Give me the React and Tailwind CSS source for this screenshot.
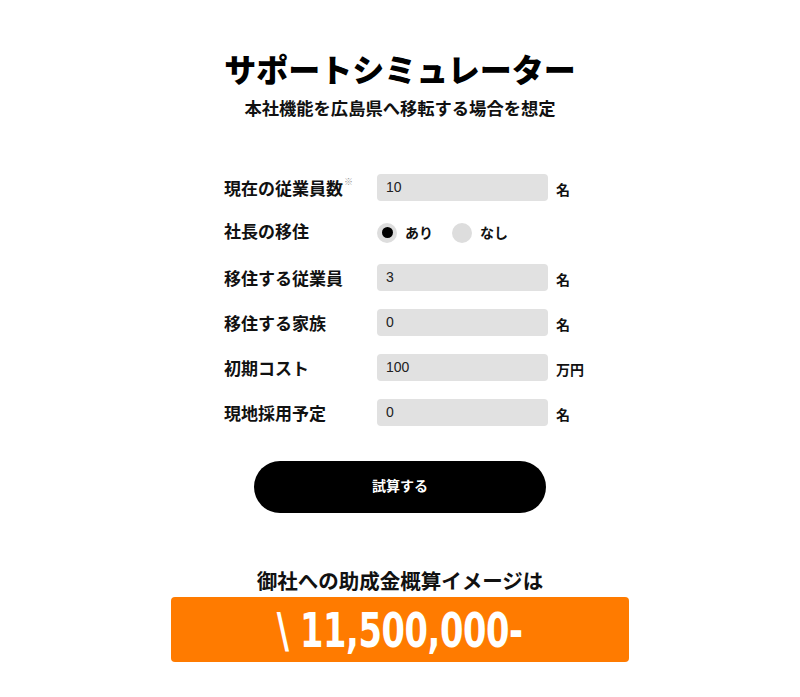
import React from "react";

const jp = { fontFamily: '"Noto Sans CJK JP", "Noto Sans", sans-serif' };

function Row({ label, note, value, unit }) {
  return (
    <div className="flex h-[27px] items-center">
      <div className="w-[153px] text-[17px] font-bold text-[#111] leading-none flex items-start" style={jp}>
        <span>{label}</span>
        {note && <span className="text-[9px] text-[#999] font-normal -mt-[2px] ml-[1px]">※</span>}
      </div>
      <div className="w-[171px] h-[27px] rounded-[4px] bg-[#e1e1e1] flex items-center pl-[9px] text-[14px] text-[#222]" style={{ fontFamily: '"Liberation Sans", Arial, sans-serif' }}>
        {value}
      </div>
      <div className="ml-[8px] pt-[3px] text-[14px] font-bold text-[#111]" style={jp}>{unit}</div>
    </div>
  );
}

export default function App() {
  return (
    <div className="w-[800px] h-[697px] bg-white flex flex-col items-center" style={jp}>
      <h1 className="mt-[46px] text-[32px] leading-[44px] font-black text-black">サポートシミュレーター</h1>
      <p className="mt-[6px] text-[17.3px] leading-[24px] font-bold text-[#111]">本社機能を広島県へ移転する場合を想定</p>

      <div className="mt-[54px] w-[458px] pl-[53px] flex flex-col gap-[18px]">
        <Row label="現在の従業員数" note value="10" unit="名" />
        <div className="flex h-[27px] items-center">
          <div className="w-[153px] text-[17px] font-bold text-[#111] leading-none -mt-[4px]">社長の移住</div>
          <div className="flex items-center">
            <span className="w-[20px] h-[20px] rounded-full bg-[#dddddd] flex items-center justify-center">
              <span className="w-[11px] h-[11px] rounded-full bg-black"></span>
            </span>
            <span className="ml-[8px] text-[14px] font-bold text-[#111]">あり</span>
            <span className="ml-[19px] w-[20px] h-[20px] rounded-full bg-[#dddddd]"></span>
            <span className="ml-[8px] text-[14px] font-bold text-[#111]">なし</span>
          </div>
        </div>
        <Row label="移住する従業員" value="3" unit="名" />
        <Row label="移住する家族" value="0" unit="名" />
        <Row label="初期コスト" value="100" unit="万円" />
        <Row label="現地採用予定" value="0" unit="名" />
      </div>

      <button className="mt-[35px] w-[292px] h-[52px] rounded-full bg-black text-white text-[14px] font-bold pb-[4px]">試算する</button>

      <h2 className="mt-[53px] text-[20.5px] leading-[28px] font-bold text-[#111]">御社への助成金概算イメージは</h2>
      <div className="mt-[3px] w-[458px] h-[65px] rounded-[4px] bg-[#ff7b00] flex items-center justify-center">
        <span className="inline-block text-white font-black text-[48px] leading-none scale-x-[0.78] tracking-[-0.5px]" style={{ fontFamily: '"DejaVu Sans Condensed", "DejaVu Sans", sans-serif' }}>\ 11,500,000-</span>
      </div>
    </div>
  );
}
